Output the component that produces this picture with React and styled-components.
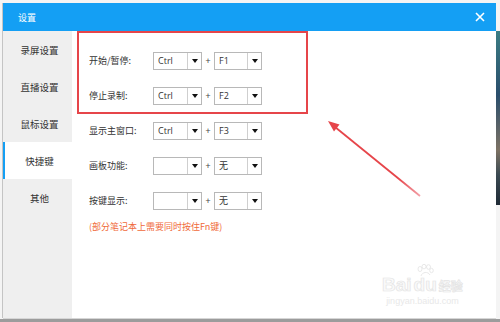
import React from "react";
import styled, { createGlobalStyle } from "styled-components";

const GlobalStyle = createGlobalStyle`
  html, body {
    margin: 0;
    padding: 0;
    background: #f3f3f3;
  }
  * {
    box-sizing: border-box;
  }
`;

const Backdrop = styled.div`
  position: relative;
  width: 500px;
  height: 322px;
  overflow: hidden;
  padding: 3px 4px 4px 3px;
  font-family: "Noto Sans CJK SC", "Noto Sans", sans-serif;
  background:
    linear-gradient(#9c9c9c, #9c9c9c) left bottom / 100% 3px no-repeat,
    linear-gradient(
        to bottom,
        #f4f4f4 0 31px,
        #3b7d84 31px,
        #2a4e6c 95px,
        #7d7264 150px,
        #3b4a52 175px,
        #1f2b36 205px,
        #f4f4f4 205px
      )
      right top / 4px 100% no-repeat,
    #f4f4f4;
`;

const Dialog = styled.div`
  height: 100%;
  display: flex;
  flex-direction: column;
  background: #fff;
  box-shadow: -1px 0 0 #c4c4c4, 0 1px 0 #d6d6d6;
`;

const TitleBar = styled.div`
  height: 28px;
  flex-shrink: 0;
  display: flex;
  align-items: center;
  justify-content: space-between;
  padding: 0 11px 0 15px;
  background: #149ff4;
  color: #fff;
  font-size: 9px;
`;

const Close = styled.svg`
  width: 10px;
  height: 10px;
`;

const Body = styled.div`
  flex: 1;
  display: flex;
`;

const Sidebar = styled.div`
  width: 69px;
  background: #efefef;
  display: flex;
  flex-direction: column;
`;

const NavItem = styled.div`
  height: 37px;
  display: flex;
  align-items: center;
  justify-content: center;
  padding-left: 2px;
  font-size: 9.5px;
  color: #333;
  border-left: 2px solid ${(p) => (p.$active ? "#149ff4" : "transparent")};
  background: ${(p) => (p.$active ? "#fff" : "transparent")};
`;

const Content = styled.div`
  flex: 1;
  padding: 12px 0 0 17px;
  color: #333;
`;

const Row = styled.div`
  height: 35px;
  display: flex;
  align-items: center;
`;

const Label = styled.div`
  width: 64px;
  font-size: 9px;
`;

const Select = styled.div`
  width: ${(p) => p.$w || 49}px;
  height: 18px;
  display: flex;
  border: 1px solid #b8b8b8;
  background: #fff;
`;

const Value = styled.div`
  flex: 1;
  display: flex;
  align-items: center;
  padding-left: 4px;
  font-size: 9px;
  font-family: "Open Sans", "Noto Sans CJK SC", sans-serif;
  color: #333;
`;

const Arrow = styled.div`
  width: 14px;
  display: flex;
  align-items: center;
  justify-content: center;
  border-left: 1px solid #cfcfcf;
  &::after {
    content: "";
    border-top: 4px solid #111;
    border-left: 3.5px solid transparent;
    border-right: 3.5px solid transparent;
  }
`;

const Plus = styled.div`
  width: 12px;
  text-align: center;
  font-size: 9px;
  color: #444;
`;

const Note = styled.div`
  margin-top: 2px;
  font-size: 9px;
  color: #f06a3a;
`;

const Highlight = styled.div`
  position: absolute;
  left: 77px;
  top: 31px;
  width: 231px;
  height: 83px;
  border: 2px solid #e6454a;
  pointer-events: none;
`;

const Overlay = styled.svg`
  position: absolute;
  left: 0;
  top: 0;
  width: 500px;
  height: 322px;
  pointer-events: none;
`;

const Watermark = styled.div`
  position: absolute;
  left: 382px;
  top: 264px;
  display: flex;
  flex-direction: column;
  align-items: center;
  color: #fafafa;
  pointer-events: none;
`;

const Paw = styled.svg`
  width: 18px;
  height: 14px;
  margin-left: 6px;
  margin-bottom: -3px;
`;

const Brand = styled.div`
  display: flex;
  align-items: flex-end;
  font-family: "Liberation Sans", sans-serif;
  font-weight: bold;
  font-size: 19px;
  line-height: 1;
  -webkit-text-stroke: 0.7px #e4e4e4;
`;

const BrandCn = styled.span`
  font-family: "Noto Sans CJK SC", sans-serif;
  font-size: 12px;
  margin-left: 2px;
  margin-bottom: 2px;
`;

const Url = styled.div`
  margin-top: 2px;
  font-family: "Liberation Sans", sans-serif;
  font-size: 9px;
  color: #e8e8e8;
`;

const navItems = ["录屏设置", "直播设置", "鼠标设置", "快捷键", "其他"];

const rows = [
  { label: "开始/暂停:", mod: "Ctrl", key: "F1" },
  { label: "停止录制:", mod: "Ctrl", key: "F2" },
  { label: "显示主窗口:", mod: "Ctrl", key: "F3" },
  { label: "画板功能:", mod: "", key: "无" },
  { label: "按键显示:", mod: "", key: "无" },
];

function Dropdown({ value, w }) {
  return (
    <Select $w={w}>
      <Value>{value}</Value>
      <Arrow />
    </Select>
  );
}

export default function App() {
  return (
    <>
      <GlobalStyle />
      <Backdrop>
        <Dialog>
          <TitleBar>
            <span>设置</span>
            <Close viewBox="0 0 10 10">
              <path d="M1 1L9 9M9 1L1 9" stroke="#fff" strokeWidth="1.6" />
            </Close>
          </TitleBar>
          <Body>
            <Sidebar>
              {navItems.map((n) => (
                <NavItem key={n} $active={n === "快捷键"}>
                  {n}
                </NavItem>
              ))}
            </Sidebar>
            <Content>
              {rows.map((r) => (
                <Row key={r.label}>
                  <Label>{r.label}</Label>
                  <Dropdown value={r.mod} w={49} />
                  <Plus>+</Plus>
                  <Dropdown value={r.key} w={48} />
                </Row>
              ))}
              <Note>(部分笔记本上需要同时按住Fn键)</Note>
            </Content>
          </Body>
        </Dialog>

        <Highlight />
        <Overlay viewBox="0 0 500 322">
          <defs>
            <linearGradient id="fade" x1="334" y1="126" x2="420" y2="196" gradientUnits="userSpaceOnUse">
              <stop offset="0" stopColor="#e6454a" />
              <stop offset="0.75" stopColor="#e6454a" />
              <stop offset="1" stopColor="#f3a0a8" />
            </linearGradient>
          </defs>
          <line x1="335" y1="127" x2="420" y2="196" stroke="url(#fade)" strokeWidth="1.8" />
          <polygon points="328,121 339.5,124.6 334,131.4" fill="#e6454a" />
        </Overlay>

        <Watermark>
          <Paw viewBox="0 0 18 14">
            <g fill="none" stroke="#e2e2e2" strokeWidth="0.8">
              <ellipse cx="4" cy="5" rx="2" ry="2.5" />
              <ellipse cx="8" cy="2.6" rx="2" ry="2.3" />
              <ellipse cx="12.5" cy="3" rx="2" ry="2.3" />
              <ellipse cx="15.5" cy="6.5" rx="1.8" ry="2.2" />
              <path d="M5 12c1-4 7-5 9-1" />
            </g>
          </Paw>
          <Brand>
            Bai
            <span style={{ marginLeft: 2 }}>du</span>
            <BrandCn>经验</BrandCn>
          </Brand>
          <Url>jingyan.baidu.com</Url>
        </Watermark>
      </Backdrop>
    </>
  );
}
